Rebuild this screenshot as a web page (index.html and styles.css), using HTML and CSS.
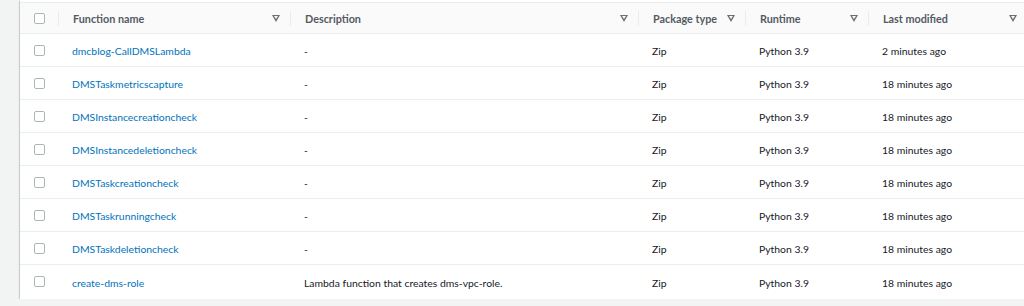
FILE: index.html
```html
<!DOCTYPE html>
<html lang="en">
<head>
  <meta charset="UTF-8" />
  <title>Functions</title>
  <link rel="stylesheet" href="styles.css">
</head>
<body>
  <div class="panel">
    <table class="functions">
      <colgroup>
        <col class="col-check">
        <col class="col-name">
        <col class="col-desc">
        <col class="col-pkg">
        <col class="col-runtime">
        <col class="col-modified">
      </colgroup>
      <thead>
        <tr>
          <th class="check"><span class="box"></span></th>
          <th><div class="head">Function name<span class="sort"></span></div></th>
          <th><div class="head">Description<span class="sort"></span></div></th>
          <th><div class="head">Package type<span class="sort"></span></div></th>
          <th><div class="head">Runtime<span class="sort"></span></div></th>
          <th><div class="head">Last modified<span class="sort"></span></div></th>
        </tr>
      </thead>
      <tbody>
        <tr>
          <td class="check"><span class="box"></span></td>
          <td><a href="#">dmcblog-CallDMSLambda</a></td>
          <td>-</td>
          <td>Zip</td>
          <td>Python 3.9</td>
          <td>2 minutes ago</td>
        </tr>
        <tr>
          <td class="check"><span class="box"></span></td>
          <td><a href="#">DMSTaskmetricscapture</a></td>
          <td>-</td>
          <td>Zip</td>
          <td>Python 3.9</td>
          <td>18 minutes ago</td>
        </tr>
        <tr>
          <td class="check"><span class="box"></span></td>
          <td><a href="#">DMSInstancecreationcheck</a></td>
          <td>-</td>
          <td>Zip</td>
          <td>Python 3.9</td>
          <td>18 minutes ago</td>
        </tr>
        <tr>
          <td class="check"><span class="box"></span></td>
          <td><a href="#">DMSInstancedeletioncheck</a></td>
          <td>-</td>
          <td>Zip</td>
          <td>Python 3.9</td>
          <td>18 minutes ago</td>
        </tr>
        <tr>
          <td class="check"><span class="box"></span></td>
          <td><a href="#">DMSTaskcreationcheck</a></td>
          <td>-</td>
          <td>Zip</td>
          <td>Python 3.9</td>
          <td>18 minutes ago</td>
        </tr>
        <tr>
          <td class="check"><span class="box"></span></td>
          <td><a href="#">DMSTaskrunningcheck</a></td>
          <td>-</td>
          <td>Zip</td>
          <td>Python 3.9</td>
          <td>18 minutes ago</td>
        </tr>
        <tr>
          <td class="check"><span class="box"></span></td>
          <td><a href="#">DMSTaskdeletioncheck</a></td>
          <td>-</td>
          <td>Zip</td>
          <td>Python 3.9</td>
          <td>18 minutes ago</td>
        </tr>
        <tr>
          <td class="check"><span class="box"></span></td>
          <td><a href="#">create-dms-role</a></td>
          <td>Lambda function that creates dms-vpc-role.</td>
          <td>Zip</td>
          <td>Python 3.9</td>
          <td>18 minutes ago</td>
        </tr>
      </tbody>
    </table>
  </div>
</body>
</html>
```

FILE: styles.css
```css
* {
  box-sizing: border-box;
}

body {
  margin: 0;
  padding: 0 0 0 20px;
  background: #f2f3f3;
  font-family: Lato, "Liberation Sans", sans-serif;
  font-size: 10.4px;
  color: #16191f;
  overflow: hidden;
}

.panel {
  width: 1007px;
  background: #fff;
  padding-top: 2px;
  box-shadow: 0 1px 1px 0 rgba(0, 28, 36, 0.35), -1px 1px 1px 0 rgba(0, 28, 36, 0.12);
}

.functions {
  width: 100%;
  border-collapse: collapse;
  table-layout: fixed;
}

.col-check { width: 38px; }
.col-name { width: 232px; }
.col-desc { width: 348px; }
.col-pkg { width: 107px; }
.col-runtime { width: 123px; }
.col-modified { width: 159px; }

thead tr {
  background: #fafafa;
  border-top: 1px solid #eaeded;
  border-bottom: 1px solid #eaeded;
}

th {
  height: 31px;
  padding: 0;
  text-align: left;
  font-size: 10.8px;
  font-weight: bold;
  color: #545b64;
}

.head {
  display: flex;
  align-items: center;
  justify-content: space-between;
  height: 15px;
  padding: 0 14px 0 14px;
  border-left: 1px solid #eaeded;
}

.sort {
  width: 0;
  height: 0;
  margin-right: -4px;
  border-left: 4px solid transparent;
  border-right: 4px solid transparent;
  border-top: 7px solid #687078;
  position: relative;
}

.sort::after {
  content: "";
  position: absolute;
  left: -2px;
  top: -6px;
  border-left: 2px solid transparent;
  border-right: 2px solid transparent;
  border-top: 3px solid #fafafa;
}

tbody tr {
  height: 33px;
  border-bottom: 1px solid #eaeded;
}

tbody tr:last-child {
  height: 34px;
  border-bottom: none;
}

td {
  padding: 2px 14px 0;
  white-space: nowrap;
}

td.check {
  padding: 0 0 0 14px;
}

th.check {
  padding: 0 0 0 14px;
}

.box {
  display: block;
  width: 11px;
  height: 11px;
  border: 1px solid #aab7b8;
  border-radius: 2px;
  background: #fff;
}

a {
  color: #0073bb;
  text-decoration: none;
}
```
